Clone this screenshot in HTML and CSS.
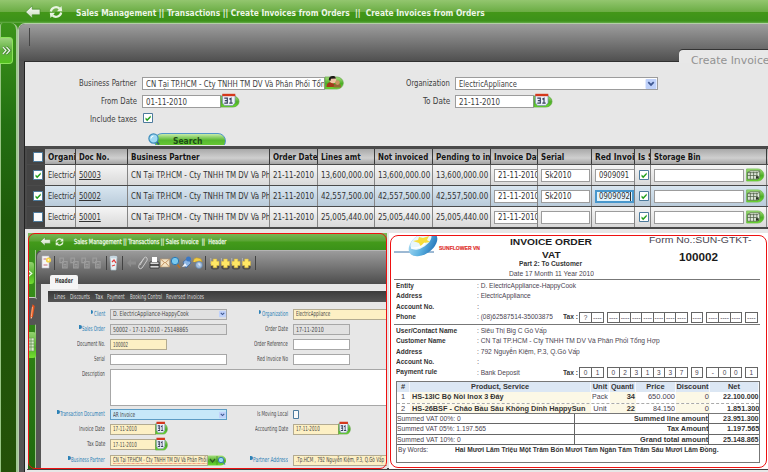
FILE: index.html
```html
<!DOCTYPE html>
<html lang="en">
<head>
<meta charset="utf-8">
<title>Create Invoices from Orders</title>
<link rel="stylesheet" href="styles.css">
</head>
<body>
<svg width="0" height="0" class="defs" aria-hidden="true">
  <defs>
    <linearGradient id="lime" x1="0" y1="0" x2="0" y2="1"><stop offset="0" stop-color="#a5df7c"/><stop offset=".55" stop-color="#4cae26"/><stop offset="1" stop-color="#6ddd2e"/></linearGradient>
    <linearGradient id="silver" x1="0" y1="0" x2="0" y2="1"><stop offset="0" stop-color="#fff"/><stop offset="1" stop-color="#c3d8b6"/></linearGradient>
    <linearGradient id="swoosh" x1="0" y1="0" x2="1" y2="1"><stop offset="0" stop-color="#b9e2f5"/><stop offset=".5" stop-color="#5fb4e2"/><stop offset="1" stop-color="#1263ad"/></linearGradient>
    <symbol id="back" viewBox="0 0 16 14"><path d="M.7 7 7.2.8V4.2H15V9.800H7.200V13.200Z" fill="url(#silver)" stroke="#3b8420" stroke-width=".6"/></symbol>
    <symbol id="refresh" viewBox="0 0 14 14"><g fill="none" stroke="#e9f4e2" stroke-width="2.200"><path d="M1.800 6.500C2.500 2.500 7.500.8 10.600 3.600"/><path d="M12.200 7.500C11.500 11.500 6.500 13.200 3.400 10.400"/></g><path d="M8 6.200 13.200 6.300 12.500 1Z M6 7.800.8 7.700 1.500 13Z" fill="#e9f4e2"/></symbol>
    <symbol id="cal" viewBox="0 0 20 15"><path d="M1 3h12a6 5.500 0 0 1 0 11H1Z" fill="url(#lime)" stroke="#55a136" stroke-width=".7"/><path d="M2.500 2h12.500v8l-2.500 2.500H4.500L2.500 10Z" fill="#edf1fa" stroke="#7d8db5" stroke-width=".7"/><path d="M2.300.8h13v2.400H2.300Z" fill="#d5381c"/><path d="M4.300 5.200h3v5h-3M4.800 7.600h2.500M9.300 6.200l1.700-1v5M9.300 10.200h3.400" fill="none" stroke="#38415f" stroke-width="1.200"/></symbol>
    <symbol id="people" viewBox="0 0 20 15"><path d="M1 2h12a6.300 6 0 0 1 0 12H1Z" fill="url(#lime)" stroke="#61a745" stroke-width=".7"/><path d="M2.500 12C2.500 8 5 7 8 7l5 5Z" fill="#a33a1b"/><circle cx="9" cy="5" r="3.300" fill="#f0c3a4"/><path d="M4.800 5C4.500 1 8 .5 11 1.400l1 2.200-5 .2-.6 2.200Z" fill="#1e1a18"/><path d="M9.500 12.500c0-3 1.500-4 4-4s3.500 1 3.500 4Z" fill="#936a37"/><circle cx="13.500" cy="7.600" r="2.300" fill="#c99562"/></symbol>
    <symbol id="bin" viewBox="0 0 20 15"><path d="M1 1h12a6.500 6.500 0 0 1 0 13H1Z" fill="url(#lime)" stroke="#61b53e" stroke-width=".7"/><path d="M2 5 5 3h10v7l-2 2H2Z" fill="#dfe8da" stroke="#4d5f46" stroke-width=".7"/><path d="M2 8h11M5 4v8M8.500 4v8M12 4v8M2 5h11l2-2" stroke="#4c5c44" stroke-width=".8" fill="none"/><path d="M11 8.800h3v2.500h-3Z" fill="#27331f"/></symbol>
    <symbol id="check" viewBox="0 0 10 10"><path d="M.5.5h9v9h-9Z" fill="#fff" stroke="#4d7b9d"/><path d="M2.500 4.500v2l1.700 1.700L7.700 4.400v-2L4.200 5.900Z" fill="#22a01d"/></symbol>
    <symbol id="uncheck" viewBox="0 0 10 10"><path d="M.5.5h9v9h-9Z" fill="#fafafa" stroke="#4d7b9d"/></symbol>
    <symbol id="chev" viewBox="0 0 12 11"><rect width="12" height="11" rx="1" fill="#bfd1fa"/><path d="m3 3.500 3 3 3-3" fill="none" stroke="#3e5791" stroke-width="1.900"/></symbol>
    <symbol id="lens" viewBox="0 0 12 12"><path d="m8 8 3 3.500" stroke="#34627d" stroke-width="2"/><circle cx="5.500" cy="5.500" r="4.600" fill="#9fd9f4" stroke="#3c8cba" stroke-width="1.200"/><path d="M3 5.500q0-2.500 2.500-2.500" fill="none" stroke="#fff"/></symbol>
    <symbol id="first" viewBox="0 0 10 13"><ellipse cx="5" cy="10" rx="4.300" ry="2.600" fill="#4a4a4a"/><path d="M.8 1v6" stroke="#c9c9c9" stroke-width=".7"/><path d="M3.200 2h3.600v2.300H9v4.200H6.800v2.300H3.200V8.500H1V4.300h2.200Z" fill="#ffe765" stroke="#d6b33a" stroke-width=".5"/></symbol>
    <symbol id="dim" viewBox="0 0 10 13"><path d="M1 1h4v5H1ZM4 5h5v7H4ZM5 8h3M5 10h3" fill="none" stroke="#9c9c9c" stroke-width="1.300"/></symbol>
  </defs>
</svg>

<div class="app">
  <header class="topbar">
    <svg class="ic-back"><use href="#back"/></svg>
    <svg class="ic-refresh"><use href="#refresh"/></svg>
    <span class="crumbs" data-w="409">Sales Management || Transactions || Create Invoices from Orders&nbsp; || &nbsp;Create Invoices from Orders</span>
  </header>
  <div class="body">
    <aside class="rail">
      <div class="rail-tab"><svg viewBox="0 0 10 12"><path d="m1.500 2 3.500 4-3.500 4M5.500 2 9 6l-3.500 4" fill="none" stroke="#3d7c2c" stroke-width="2.600"/><path d="m1.500 2 3.500 4-3.500 4M5.500 2 9 6l-3.500 4" fill="none" stroke="#eef7e9" stroke-width="1.400"/></svg></div>
    </aside>
    <main class="frame">
      <div class="frame-head"><i class="divider"></i><div class="page-tab"><span data-w="84">Create Invoices</span></div></div>
      <div class="content">
        <section class="filter">
          <label><span data-w="58">Business Partner</span></label>
          <div class="field"><div class="input w183"><span data-w="179">CN Tại TP.HCM - Cty TNHH TM DV Và Phân Phối Tổn</span></div><svg class="ic-btn"><use href="#people"/></svg></div>
          <label><span data-w="44">Organization</span></label>
          <div class="field"><div class="input w203"><span data-w="58">ElectricAppliance</span><svg class="ic-chev"><use href="#chev"/></svg></div></div>

          <label><span data-w="36">From Date</span></label>
          <div class="field"><div class="input w79"><span data-w="41">01-11-2010</span></div><svg class="ic-btn"><use href="#cal"/></svg></div>
          <label><span data-w="27">To Date</span></label>
          <div class="field"><div class="input w79"><span data-w="41">21-11-2010</span></div><svg class="ic-btn"><use href="#cal"/></svg></div>

          <label><span data-w="47">Include taxes</span></label>
          <div class="field"><svg class="ic-check"><use href="#check"/></svg></div>
        </section>
        <div class="search-clip"><svg class="ic-lens"><use href="#lens"/></svg><div class="search"><span data-w="29">Search</span></div></div>

        <section class="grid">
          <div class="row head">
            <div class="sel"><svg><use href="#uncheck"/></svg></div>
            <div><span data-w="32">Organiz</span></div><div><span data-w="30">Doc No.</span></div><div><span data-w="69">Business Partner</span></div><div><span data-w="45">Order Date</span></div><div><span data-w="40">Lines amt</span></div><div><span data-w="50">Not invoiced</span></div><div><span data-w="76">Pending to invoice</span></div><div><span data-w="51">Invoice Date</span></div><div><span data-w="23">Serial</span></div><div><span data-w="49">Red Invoice</span></div><div><span data-w="26">Is Self</span></div><div><span data-w="47">Storage Bin</span></div>
          </div>
          <div class="row">
            <div class="sel"><svg><use href="#check"/></svg></div>
            <div><span data-w="58">ElectricAppliance</span></div><div><u data-w="22">50003</u></div><div><span data-w="148">CN Tại TP.HCM - Cty TNHH TM DV Và Phân</span></div><div><span data-w="41">21-11-2010</span></div><div><span data-w="52">13,600,000.00</span></div><div><span data-w="52">13,600,000.00</span></div><div><span data-w="52">13,600,000.00</span></div>
            <div class="c-in"><div class="input cut"><span data-w="41">21-11-2010</span></div></div><div class="c-in"><div class="input"><span data-w="26">Sk2010</span></div></div><div class="c-in"><div class="input cut"><span data-w="30">0909091</span></div></div><div class="c-chk"><svg><use href="#check"/></svg></div><div class="c-in"><div class="input w90"></div><svg class="ic-bin"><use href="#bin"/></svg></div>
          </div>
          <div class="row active">
            <div class="sel"><svg><use href="#check"/></svg></div>
            <div><span data-w="58">ElectricAppliance</span></div><div><u data-w="22">50002</u></div><div><span data-w="148">CN Tại TP.HCM - Cty TNHH TM DV Và Phân</span></div><div><span data-w="41">21-11-2010</span></div><div><span data-w="52">42,557,500.00</span></div><div><span data-w="52">42,557,500.00</span></div><div><span data-w="52">42,557,500.00</span></div>
            <div class="c-in"><div class="input cut"><span data-w="41">21-11-2010</span></div></div><div class="c-in"><div class="input"><span data-w="26">Sk2010</span></div></div><div class="c-in"><div class="input focus"><span data-w="31">0909092</span><i class="caret"></i></div></div><div class="c-chk"><svg><use href="#check"/></svg></div><div class="c-in"><div class="input w90"></div><svg class="ic-bin"><use href="#bin"/></svg></div>
          </div>
          <div class="row">
            <div class="sel"><svg><use href="#uncheck"/></svg></div>
            <div><span data-w="58">ElectricAppliance</span></div><div><u data-w="22">50001</u></div><div><span data-w="148">CN Tại TP.HCM - Cty TNHH TM DV Và Phân</span></div><div><span data-w="41">21-11-2010</span></div><div><span data-w="52">25,005,440.00</span></div><div><span data-w="52">25,005,440.00</span></div><div><span data-w="52">25,005,440.00</span></div>
            <div class="c-in"><div class="input cut"><span data-w="41">21-11-2010</span></div></div><div class="c-in"><div class="input"></div></div><div class="c-in"><div class="input cut"></div></div><div class="c-chk"><svg><use href="#check"/></svg></div><div class="c-in"><div class="input w90"></div><svg class="ic-bin"><use href="#bin"/></svg></div>
          </div>
        </section>

        <section class="panels">
          <article class="mini">
            <div class="mini-top"><svg class="m-back"><use href="#back"/></svg><svg class="m-ref"><use href="#refresh"/></svg><span data-w="152">Sales Management || Transactions || Sales Invoice&nbsp; || &nbsp;Header</span></div>
            <div class="mini-body">
              <div class="mini-rail">
                <div class="m-tab m-lime"><svg viewBox="0 0 6 10"><path d="m1 2 3.500 3L1 8" fill="none" stroke="#f2faec" stroke-width="1.500"/></svg></div>
                <div class="m-tab m-dark"><svg viewBox="0 0 8 20"><path d="m4 1 2.500 2-2 12-2.500 3-.5-4Z" fill="#e8521c"/><path d="M4 4 2.800 15" stroke="#ffc08f"/><path d="m2 15 .2 3 1.300-1.700Z" fill="#f4dfbd"/></svg></div>
                <div class="m-tab m-lime m-list"><svg viewBox="0 0 7 16"><path d="M1 1h5v13H1Z" fill="#d7eacb" stroke="#6e9d5b" stroke-width=".6"/><path d="M1 4h5M1 7h5M1 10h5M3 1v13" stroke="#568744" stroke-width=".7"/></svg></div>
              </div>
              <div class="mini-main">
                <div class="mini-head">
                  <svg class="tools" viewBox="0 0 222 18">
                    <g stroke="#424242" stroke-width="1"><path d="M17.500 2v14M69.500 2v14M85.500 2v14M168.500 2v14M218.500 2v14"/></g>
                    <path d="M5 2h7v12H5Z" fill="#f6f6f6" stroke="#bcb9c8" stroke-width=".6"/><path d="M6.500 5h3M6.500 11h4" stroke="#c46d79"/><circle cx="11.500" cy="6" r="2.600" fill="#f5d44b"/><circle cx="11.500" cy="6" r="1" fill="#fff7c0"/>
                    <use href="#dim" x="22" y="3" width="9" height="12"/><use href="#dim" x="33" y="3" width="9" height="12"/><use href="#dim" x="44" y="3" width="9" height="12"/><use href="#dim" x="55" y="3" width="9" height="12"/>
                    <path d="M73 3h7l-1 13h-5Z" fill="#e9f1f5" stroke="#a8bdc8" stroke-width=".7"/><ellipse cx="76.500" cy="3" rx="3.700" ry="1.300" fill="#c7d7e1"/><path d="m75 8 2-2 2 3M78 11l-3 1" fill="none" stroke="#df3d3d" stroke-width="1.300"/>
                    <path d="m90 9 4-4v2.500h5v3h-5V13Z" fill="#8d8d8d"/>
                    <path d="m103 11 4-7q2-2 3 0t-1 4l-4 6q-2 1.500-3 0t.500-4l4-5" fill="none" stroke="#c9c9c9" stroke-width="1"/>
                    <path d="M113 8h9v6h-9Z" fill="#d8d8d8" stroke="#242424" stroke-width=".7"/><path d="M115 3h5v5h-5Z" fill="#fff"/><path d="M113 11h9" stroke="#262626" stroke-width="1.500"/>
                    <path d="M123.500 5h9v8h-9Z" fill="#f4e4c6" stroke="#b69c77" stroke-width=".6"/><path d="m123.500 5 4.500 4 4.500-4M123.500 13l3.500-4M132.500 13 129 9" fill="none" stroke="#b8804a" stroke-width=".8"/>
                    <path d="m140 10 3 4" stroke="#b2732d" stroke-width="1.800"/><circle cx="138" cy="7" r="3.700" fill="#79c9ef" stroke="#2a76b2"/>
                    <path d="m146 8 5-4 3 5-5 5Z" fill="#8cb6e5" stroke="#355f9a" stroke-width=".7"/><circle cx="151.500" cy="5" r="2.500" fill="#3b78c4"/><path d="m145 13 3-4 2 3Z" fill="#eef4ff"/>
                    <path d="M156 8q1-5 5-4 4 0 4 4l-2-1-5 1" fill="#f2cd47" stroke="#b99425" stroke-width=".6"/><circle cx="162" cy="11" r="3.400" fill="#a3bddb" stroke="#597ea9" stroke-width=".7"/><path d="M162 9v2h1.500" fill="none" stroke="#fff" stroke-width=".8"/>
                    <use href="#first" x="173" y="3" width="10" height="13"/><use href="#first" x="183.500" y="3" width="10" height="13"/><use href="#first" x="194" y="3" width="10" height="13"/><use href="#first" x="204.500" y="3" width="10" height="13"/>
                  </svg>
                  <div class="mini-tab"><span data-w="18">Header</span></div>
                </div>
                <nav class="subtabs"><span data-w="11">Lines</span><span data-w="20">Discounts</span><span data-w="8">Tax</span><span data-w="18">Payment</span><span data-w="32">Booking Control</span><span data-w="38">Reversed Invoices</span></nav>
                <div class="mform">
                  <label class="req"><span data-w="11">Client</span></label><div class="mi wide gray"><span data-w="76">D. ElectricAppliance-HappyCook</span><svg class="m-chev"><use href="#chev"/></svg></div>
                  <label class="req"><span data-w="26">Organization</span></label><div class="mi wide yel open"><span data-w="34">ElectricAppliance</span></div>

                  <label class="req"><span data-w="23">Sales Order</span></label><div class="mi wide gray"><span data-w="75">50002 - 17-11-2010 - 25148865</span></div>
                  <label><span data-w="23">Order Date</span></label><div class="mi gray"><span data-w="28">17-11-2010</span></div>

                  <label><span data-w="28">Document No.</span></label><div class="mi yel"><span data-w="15">100002</span></div>
                  <label><span data-w="34">Order Reference</span></label><div class="mi"></div>

                  <label><span data-w="11">Serial</span></label><div class="mi wide"></div>
                  <label><span data-w="31">Red Invoice No</span></label><div class="mi"></div>

                  <label class="top"><span data-w="23">Description</span></label><div class="mi area"></div>

                  <label class="req"><span data-w="45">Transaction Document</span></label><div class="mi wide blue"><span data-w="22">AR Invoice</span><svg class="m-chev"><use href="#chev"/></svg></div>
                  <label><span data-w="31">Is Moving Local</span></label><svg class="m-chk" viewBox="0 0 6 9"><path d="M.5.5h5v8h-5Z" fill="#fafafa" stroke="#4d7b9d"/></svg>

                  <label><span data-w="26">Invoice Date</span></label><div class="mf"><div class="mi date yel"><span data-w="24">17-11-2010</span></div><svg class="m-cal" preserveAspectRatio="none" viewBox="0 0 20 15"><use href="#cal" width="20" height="15"/></svg></div>
                  <label><span data-w="33">Accounting Date</span></label><div class="mf"><div class="mi date yel"><span data-w="24">17-11-2010</span></div><svg class="m-cal" preserveAspectRatio="none" viewBox="0 0 20 15"><use href="#cal" width="20" height="15"/></svg></div>

                  <label><span data-w="18">Tax Date</span></label><div class="mf"><div class="mi date yel"><span data-w="24">17-11-2010</span></div><svg class="m-cal" preserveAspectRatio="none" viewBox="0 0 20 15"><use href="#cal" width="20" height="15"/></svg></div>
                  <i></i><i></i>

                  <label class="req"><span data-w="34">Business Partner</span></label><div class="mf"><div class="mi bp yel"><span data-w="94" class="wavy">CN Tại TP.HCM - Cty TNHH TM DV Và Phân Phối</span></div><svg class="m-bp" viewBox="0 0 19 11"><path d="M0 .5h13a5 5 0 0 1 0 10H0Z" fill="url(#lime)"/><path d="m2 4 2.500 3L7 4" fill="none" stroke="#315a23" stroke-width="1.200"/><path d="M9 1v9" stroke="#3d8b25" stroke-width=".7"/><circle cx="13" cy="5" r="2.700" fill="#9ad8f5" stroke="#377fae"/><path d="m15 7 2 2.500" stroke="#377fae" stroke-width="1.200"/></svg></div>
                  <label class="req"><span data-w="35">Partner Address</span></label><div class="mi wide yel open"><span data-w="88">.Tp.HCM , 792 Nguyễn Kiệm, P.3, Q.Gò Vấp</span></div>
                </div>
              </div>
            </div>
          </article>

          <article class="sheet">
            <header class="doc-head">
              <svg class="logo" viewBox="0 0 90 24"><path d="M0 17h40" stroke="#24629d" stroke-width=".9"/><ellipse cx="29" cy="9" rx="16" ry="10" transform="rotate(-35 29 9)" fill="url(#swoosh)"/><ellipse cx="27" cy="6" rx="12" ry="6.500" transform="rotate(-35 27 6)" fill="#e8f6fb"/><path d="m19 6 5-1 1-3 4 1 6-2-2 4 3 2-6 1-3 4-2-4Z" fill="#f7dd39"/><path d="M17 13q9 1 14-5" fill="none" stroke="#fff" stroke-width="1.300"/><text x="45" y="15" textLength="41" lengthAdjust="spacingAndGlyphs">SUNFLOWER VN</text></svg>
              <div class="doc-title"><b class="t1"><span data-w="82">INVOICE ORDER</span></b><b class="t1 t2"><span data-w="19">VAT</span></b><b class="t3"><span data-w="63">Part 2: To Customer</span></b><span class="t4"><span data-w="85">Date 17 Month 11 Year 2010</span></span></div>
              <div class="doc-no"><span class="n1"><span data-w="102">Form No.:SUN-GTKT-</span></span><b><span data-w="39">100002</span></b></div>
            </header>
            <div class="kv first">
              <b><span data-w="18">Entity</span></b><span><span data-w="99">: D. ElectricAppliance-HappyCook</span></span>
              <b><span data-w="26">Address</span></b><span><span data-w="54">: ElectricAppliance</span></span>
              <b><span data-w="38">Account No.</span></b><span>:</span>
              <b><span data-w="20">Phone</span></b><div class="taxline"><span class="val"><span data-w="76">: (08)62587514-35003875</span></span><b class="tax"><span data-w="15">Tax :</span></b><div class="boxes"><p><i>?</i><i>----</i></p><p><i>----</i><i>----</i><i>----</i><i>----</i><i>----</i><i>----</i><i>----</i></p><p><i>----</i></p><p><i>----</i><i>----</i><i>----</i></p><p><i>----</i></p></div></div>
            </div>
            <div class="kv second">
              <b><span data-w="61">User/Contact Name</span></b><span><span data-w="70">: Siêu Thị Big C Gò Vấp</span></span>
              <b><span data-w="50">Customer Name</span></b><span><span data-w="183">: CN Tại TP.HCM - Cty TNHH TM DV Và Phân Phối Tổng Hợp</span></span>
              <b><span data-w="26">Address</span></b><span><span data-w="103">: 792 Nguyễn Kiệm, P.3, Q.Gò Vấp</span></span>
              <b><span data-w="38">Account No.</span></b><span>:</span>
              <b><span data-w="41">Payment rule</span></b><div class="taxline"><span class="val"><span data-w="43">: Bank Deposit</span></span><b class="tax"><span data-w="15">Tax :</span></b><div class="boxes"><p><i>0</i><i>1</i></p><p><i>0</i><i>2</i><i>3</i><i>1</i><i>3</i><i>3</i><i>7</i></p><p><i>9</i></p><p><i>-</i><i>0</i><i>0</i></p><p><i>1</i></p></div></div>
            </div>
            <div class="items">
              <div class="ir ih"><b>#</b><b><span data-w="58">Product, Service</span></b><b><span data-w="15">Unit</span></b><b><span data-w="23">Quanti</span></b><b><span data-w="18">Price</span></b><b><span data-w="32">Discount</span></b><b><span data-w="12">Net</span></b></div>
              <div class="ir"><span>1</span><b><span data-w="92">HS-13IC Bộ Nồi Inox 3 Đáy</span></b><span><span data-w="16">Pack</span></span><b>34</b><span><span data-w="27">650.000</span></span><span>0</span><b><span data-w="36">22.100.000</span></b></div>
              <div class="ir dash"><span>2</span><b><span data-w="174">HS-26BSF - Chảo Bầu Sâu Không Dính HappySun</span></b><span><span data-w="13">Unit</span></span><b>22</b><span><span data-w="22">84.150</span></span><span>0</span><b><span data-w="32">1.851.300</span></b></div>
            </div>
            <div class="totals">
              <div class="tr"><span><span data-w="64">Summed VAT 00%: 0</span></span><b><span data-w="74">Summed line amount</span></b><b><span data-w="36">23.951.300</span></b></div>
              <div class="tr"><span><span data-w="89">Summed VAT 05%: 1.197.565</span></span><b><span data-w="42">Tax Amount</span></b><b><span data-w="32">1.197.565</span></b></div>
              <div class="tr"><span><span data-w="64">Summed VAT 10%: 0</span></span><b><span data-w="68">Grand total amount</span></b><b><span data-w="36">25.148.865</span></b></div>
              <div class="words"><span data-w="30">By Words:</span><b><span data-w="264">Hai Mươi Lăm Triệu Một Trăm Bốn Mươi Tám Ngàn Tám Trăm Sáu Mươi Lăm Đồng.</span></b></div>
            </div>
          </article>
        </section>
      </div>
    </main>
  </div>
</div>
<script src="fit.js"></script>
</body>
</html>
```

FILE: styles.css
```css
* { box-sizing: border-box; }
html, body { margin: 0; }
body { width: 768px; height: 472px; overflow: hidden; background: #555; font: 9px "DejaVu Sans Condensed", "DejaVu Sans", sans-serif; color: #3e3e3e; }
svg { display: block; flex: none; overflow: visible; }
.defs { position: absolute; }
b { font-weight: bold; }
[data-w] { display: inline-block; white-space: nowrap; transform-origin: 0 50%; flex: none; }

.app { width: 768px; height: 472px; display: flex; flex-direction: column; overflow: hidden; }
.topbar { height: 23px; flex: none; display: flex; align-items: center; background: linear-gradient(#93c66f, #6aac43 12px, #439718 12px, #3c911a 21px, #66ad49); padding-left: 25px; }
.ic-back { width: 16px; height: 14px; }
.ic-refresh { width: 14px; height: 14px; margin-left: 8px; }
.crumbs { margin-left: 13px; margin-top: 3px; font-weight: bold; font-size: 8.500px; line-height: 12px; color: #eef7e8; }
.body { flex: 1; display: flex; background: #3b9119; min-height: 0; }
.rail { width: 18px; flex: none; padding-top: 14px; border-left: 1px solid #97c583; border-right: 2px solid #a3c795; border-radius: 3px 7px 0 0; background: linear-gradient(#3c941a, #237012 100px, #1e5a0a 200px, #245108); }
.rail-tab { width: 13px; height: 27px; margin-left: -1px; border: 1px solid #8de45c; border-left: 0; border-radius: 0 4px 4px 0; background: linear-gradient(#9ed47f, #5fae3e 50%, #54c41f); display: flex; align-items: center; }
.rail-tab svg { width: 10px; height: 11px; margin-left: 1px; }
.frame { flex: 1; min-width: 0; display: flex; flex-direction: column; background: #545454; padding-left: 5px; border-left: 1px solid #b8cdb0; border-top: 1px solid #b3cfa7; border-radius: 7px 0 0 0; }
.frame-head { height: 37px; flex: none; margin-left: -5px; padding-left: 10px; display: flex; justify-content: space-between; align-items: flex-end; background: linear-gradient(#9d9d9d, #505050); border-radius: 6px 0 0 0; }
.divider { width: 1px; height: 18px; background: #454545; align-self: flex-start; margin-top: 4px; }
.page-tab { width: 89px; height: 13px; margin-bottom: -2px; position: relative; z-index: 1; background: #e8e8e8; border-radius: 4px 0 0 0; padding: 3px 0 0 12px; font: 10.500px/14px "DejaVu Sans", sans-serif; color: #929292; white-space: nowrap; box-shadow: 0 -1px 0 #333; }
.content { flex: 1; min-width: 0; border-left: 1px solid #222; border-top: 1px solid #303030; background: #e7e7e7; overflow: hidden; }

.filter { margin-top: 15px; height: 55px; display: grid; grid-template-columns: 112px 208px 105px 1fr; grid-auto-rows: 18px; }
.filter label { text-align: right; line-height: 13px; }
.field { display: flex; padding-left: 5px; height: 13px; }
.input { height: 13px; border: 1px solid #9c9c9c; background: #fff; padding-left: 3px; display: flex; align-items: center; overflow: hidden; white-space: nowrap; }
.w183 { width: 183px; } .w203 { width: 203px; } .w79 { width: 79px; }
.ic-btn { width: 20px; height: 15px; margin-top: -2px; margin-left: -1px; }
.ic-chev { width: 12px; height: 10px; margin-left: auto; }
.ic-check { width: 10px; height: 10px; margin: 0 0 0 1px; }
.search-clip { height: 12px; margin: 1px 0 1px 123px; display: flex; overflow: hidden; }
.ic-lens { width: 12px; height: 12px; position: relative; z-index: 1; }
.search { width: 72px; height: 16px; margin: 0 0 0 -6px; border: 1.500px solid #5397c9; border-radius: 8px; background: linear-gradient(#c5ebaa, #57b830 45%, #6fd035); text-align: center; font-weight: bold; line-height: 12px; color: #1e4d17; padding: 1px 4px 0 0; }

.grid { height: 83px; background: #4a4a4a; padding: 3px 0 0 2px; overflow: hidden; }
.row { display: grid; grid-template-columns: 18px 31px 52px 142px 48px 57px 58px 58px 47px 54px 43px 16px 116px; height: 20px; margin-bottom: 1px; background: linear-gradient(#f5f5f5, #d9d9d9); color: #333; }
.row > div { border-right: 1px solid #858585; padding-left: 2.500px; overflow: hidden; white-space: nowrap; display: flex; align-items: center; }
.row > .sel { background: #444; border: 0; padding-left: 6px; }
.sel svg, .c-chk svg { width: 10px; height: 10px; }
.head { height: 15px; margin-bottom: 1px; background: linear-gradient(#a9a9a9, #cfcfcf 60%, #a4a4a4); font-weight: bold; color: #151515; }
.head > div { border-right-color: #3a3a3a; }
.active { background: linear-gradient(#d9e6f0, #b9cbda); }
.row > .c-chk { padding-left: 4px; }
.c-in .input { flex: 1; margin-right: 1px; height: 13px; }
.row .cut { margin-right: -2px; }
.row .focus { margin-right: 0; border: 2px solid #4897cc; background: #e2f4fd; padding-left: 2px; }
.c-in .input.w90 { flex: none; width: 90px; margin: 0; }
.caret { width: 1px; height: 9px; background: #333; }
.ic-bin { width: 20px; height: 14px; margin-left: 1px; }

.panels { height: 241px; margin-left: 2px; padding-top: 4px; display: flex; border-bottom: 2px solid #3e3e3e; }
.mini, .sheet { position: relative; height: 236px; overflow: hidden; }
.mini::after, .sheet::after { content: ""; position: absolute; border: 1px solid #ee1111; border-radius: 7px; pointer-events: none; }
.mini::after { left: 1px; right: 0; top: 0; bottom: 0; }
.mini { width: 360px; flex: none; background: #e7e7e7; font-size: 7px; color: #484848; }
.mini-top { height: 17px; margin-left: 1px; background: linear-gradient(#7cb95a, #59a433 8px, #439a1a 9px, #3b9119); padding-left: 12px; display: flex; align-items: center; color: #eff8e9; -webkit-text-stroke: .25px #eff8e9; }
.m-back { width: 11px; height: 11px; } .m-ref { width: 9px; height: 10px; margin: 0 10px 0 4px; }
.mini-body { display: flex; height: 219px; margin-left: 1px; background: #3b9119; }
.mini-rail { width: 8px; flex: none; border-right: 1px solid #9bc48a; background: linear-gradient(#3d951d, #2a7a12 60%, #1f6a0e); padding-top: 12px; }
.m-tab { width: 6px; height: 22px; display: flex; align-items: center; border-radius: 0 3px 3px 0; }
.m-tab svg { width: 5px; height: 11px; }
.m-lime { background: linear-gradient(#93d070, #51b127 60%, #74e030); }
.m-dark { margin: 13px 0 0 1px; width: 8px; height: 28px; background: #555; position: relative; border-top: 1px solid #ccc; }
.m-dark svg { width: 7px; height: 20px; }
.m-list { margin-top: 7px; width: 8px; height: 26px; } .m-list svg { width: 7px; height: 18px; }
.mini-main { flex: 1; min-width: 0; border-left: 5px solid #555; border-top: 1px solid #b4b4b4; border-radius: 6px 0 0 0; background: #e7e7e7; }
.mini-head { height: 33px; margin-left: -4px; background: linear-gradient(#9b9b9b, #4d4d4d); border-radius: 6px 0 0 0; }
.tools { width: 222px; height: 18px; transform: translateY(3px); }
.mini-tab { margin: 6px 0 0 13px; width: 28px; height: 15px; background: #f5f5f5; border-radius: 2px 2px 0 0; text-align: center; font: bold 7px/12px "DejaVu Sans Condensed", sans-serif; color: #333; position: relative; border-bottom: 1px solid #e7e7e7; }
.subtabs { margin: 7px 0 4px 7px; height: 11px; background: linear-gradient(#3b3b3b, #555); color: #dedede; display: flex; align-items: center; gap: 4.600px; padding-left: 6px; }
.mform { display: grid; column-gap: 4.500px; grid-template-columns: 64px 117px 57px 1fr; grid-template-rows: 16px 15px 15px 14px 42px 13px 16px 15px 16px; align-items: center; }
.mform label { text-align: right; white-space: nowrap; line-height: 11px; }
.mform .req { color: #2c81b6; }
.req::before { content: ""; display: inline-block; width: 2.500px; height: 4px; background: #2c81b6; border-radius: 0 2px 2px 0; margin-right: .500px; vertical-align: 2px; }
.mi { width: 57px; height: 11px; border: 1px solid #a7a7a7; background: #fff; display: flex; align-items: center; padding-left: 2px; overflow: hidden; }
.wide { width: 100%; } .gray { background: #e1e1e1; } .yel { background: #fdf0c4; border-color: #b3ab91; } .open { border-right: 0; }
.blue { background: #c7e8f9; border: 1.500px solid #5d9cc5; }
.area { grid-column: 2 / 5; width: 100%; height: 37px; align-self: start; margin-top: 3px; border-right: 0; }
.mform .top { align-self: start; margin-top: 3px; }
.m-chev { width: 7px; height: 8px; margin-left: auto; }
.m-chk { width: 6px; height: 9px; }
.mf { display: flex; align-items: center; }
.date { width: 46px; } .m-cal { width: 13px; height: 14px; margin-top: -2px; margin-left: -1px; }
.bp { width: 98px; } .m-bp { width: 19px; height: 11px; }
.wavy { text-decoration: underline dotted #e45b49 1px; }

.sheet { flex: 1; margin-left: 2px; background: #fff; padding: 0 8px 0 5px; font: 7.500px "Liberation Sans", Arial, sans-serif; color: #4a4450; }
.sheet::after { left: 1px; right: 1px; top: 2px; bottom: 1px; border-radius: 8px; }
.sheet b { color: #343434; }
.doc-head { height: 47px; display: grid; grid-template-columns: 92px 130px 1fr; border-bottom: 1px solid #777; }
.logo { width: 90px; height: 24px; margin-top: 2px; font: bold 6px "Liberation Sans", sans-serif; fill: #e0302d; overflow: hidden; }
.logo text { stroke: #e0302d; stroke-width: .2px; }
.doc-title { display: flex; flex-direction: column; align-items: center; }
.doc-title > *, .doc-no > * { display: block; }
.doc-title .t1 { font-size: 9.500px; line-height: 13px; height: 13px; padding-top: 2px; color: #1c1c1c; }
.doc-title .t3 { line-height: 8px; margin-top: 1px; }
.doc-title .t4 { line-height: 10px; margin-top: 1px; }
.doc-no { text-align: center; padding-left: 24px; font-size: 9.500px; }
.doc-no .n1 { line-height: 13px; }
.doc-no b { font-size: 10.500px; line-height: 12px; margin-top: 5px; color: #1a1a1a; padding-right: 2px; }
.kv { display: grid; grid-template-columns: 81px 1fr; padding-left: 2px; grid-auto-rows: 10.300px; line-height: 10.300px; }
.first { height: 45px; padding-top: 1px; border-bottom: 1px solid #777; }
.second { padding-top: 1px; height: 56px; }
.taxline { display: flex; align-items: center; height: 11px; }
.taxline .val { width: 86px; } .tax { width: 16px; }
.boxes { display: flex; gap: 3px; }
.boxes p { margin: 0; display: flex; border: 1px solid #666; height: 11px; }
.boxes i { font-style: normal; width: 11.300px; text-align: center; line-height: 9px; font-size: 6.500px; }
.boxes i + i { border-left: 1px solid #666; }
.boxes p:last-child i, .boxes p:nth-child(3) i { width: 10.500px; }
.items { margin: 0 0 0 2px; width: 364px; border: 1px solid #777; height: 33px; }
.ir { display: grid; grid-template-columns: 13px 181px 19px 26px 40px 34px 1fr; height: 10.300px; line-height: 10px; font-size: 7.500px; }
.ir > * { text-align: right; padding-right: 1px; overflow: hidden; white-space: nowrap; }
.ir > :nth-child(2) { text-align: left; padding-left: 2px; }
.ir > :nth-child(3) { text-align: center; }
.ir:not(.ih) > :nth-child(even) { background: #fcf8e6; }
.ir.ih > * { background: #dce7f4; text-align: center; border-right: 1px solid #f4f7fb; padding: 0; }
.ir > :first-child { text-align: center; }
.dash { border-top: 1px dashed #aaa; line-height: 9px; }
.ir > :last-child { padding-right: 0; }
.totals { width: 364px; margin-left: 2px; border: 1px solid #777; border-top: 0; height: 49px; font-size: 7.500px; }
.tr { display: grid; grid-template-columns: 178px 134px 1fr; height: 10.300px; line-height: 9.500px; border-bottom: 1px solid #666; }
.tr > * { border-right: 1px solid #666; text-align: right; }
.tr > :first-child { text-align: left; } .tr > :last-child { border: 0; }
.words { display: flex; padding: 0 0 0 1px; line-height: 9px; font-size: 7px; }
.words b { margin-left: 27px; }
```

FILE: fit.js
```js
// Condense or widen each label to the width it declares.
document.querySelectorAll('[data-w]').forEach(function (el) {
  var want = parseFloat(el.dataset.w);
  var natural = el.offsetWidth;
  el.style.transform = 'scaleX(' + want / natural + ')';
  el.style.marginRight = (want - natural) + 'px';
});
```
